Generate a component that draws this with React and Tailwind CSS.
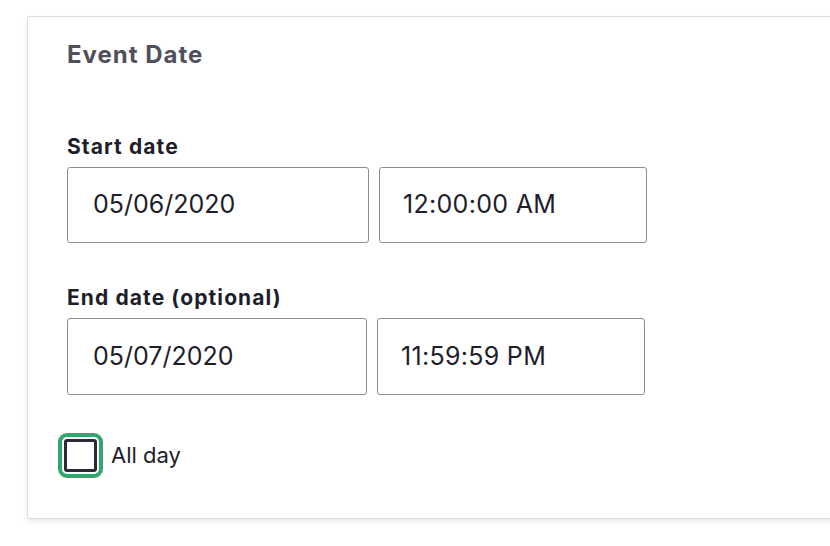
export default function App() {
    const font = { fontFamily: 'Inter, "Noto Sans", sans-serif' };
    return (
        <div className="w-[830px] h-[546px] overflow-hidden bg-white pl-[27px] pt-[16px]" style={font}>
            <div className="w-[840px] h-[503px] bg-white border border-[#dcdce3] rounded-[2px] shadow-[0_3px_5px_rgba(0,0,0,0.08)] pl-[39px] pt-[24px]">
                {/* card title */}
                <h2 className="text-[24px] leading-[28px] font-bold tracking-[1px] text-[#50505c]">Event Date</h2>

                {/* start date */}
                <div className="mt-[66px]">
                    <label className="block text-[21px] leading-[24px] font-bold tracking-[1.1px] text-[#1e1e2a]">Start date</label>
                    <div className="flex gap-[10px] mt-[8px]">
                        <div className="w-[302px] h-[76px] border-[1.5px] border-[#8b8d97] rounded-[3px] flex items-center pl-[25px] text-[25px] text-[#1e1e2a]">
                            05/06/2020
                        </div>
                        <div className="w-[268px] h-[76px] border-[1.5px] border-[#8b8d97] rounded-[3px] flex items-center pl-[23px] text-[25px] tracking-[0.3px] text-[#1e1e2a]">
                            12:00:00 AM
                        </div>
                    </div>
                </div>

                {/* end date */}
                <div className="mt-[43px]">
                    <label className="block text-[21px] leading-[24px] font-bold tracking-[1.1px] text-[#1e1e2a]">End date (optional)</label>
                    <div className="flex gap-[10px] mt-[8px]">
                        <div className="w-[300px] h-[77px] border-[1.5px] border-[#8b8d97] rounded-[3px] flex items-center pl-[25px] text-[25px] text-[#1e1e2a]">
                            05/07/2020
                        </div>
                        <div className="w-[268px] h-[77px] border-[1.5px] border-[#8b8d97] rounded-[3px] flex items-center pl-[23px] text-[25px] tracking-[0.3px] text-[#1e1e2a]">
                            11:59:59 PM
                        </div>
                    </div>
                </div>

                {/* all day checkbox */}
                <div className="flex items-center mt-[44px] -ml-[3px]">
                    <div className="w-[33px] h-[33px] border-[3px] border-[#2a2a38] rounded-[3px] outline-[4px] outline-solid outline-[#33a56e] outline-offset-[2px]" />
                    <span className="ml-[14px] text-[22px] text-[#1e1e2a]">All day</span>
                </div>
            </div>
        </div>
    );
}
